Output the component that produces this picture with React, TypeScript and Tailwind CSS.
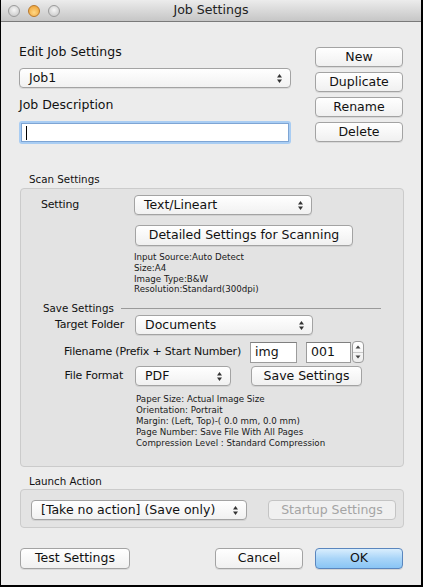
import React from 'react'

function Arrows() {
  return (
    <svg width="7" height="11" viewBox="0 0 7 11" className="shrink-0">
      <path d="M3.5 1 L6 4.5 L1 4.5 Z" fill="#333" />
      <path d="M3.5 10 L6 6.5 L1 6.5 Z" fill="#333" />
    </svg>
  )
}

function PopUp({ label, className = '' }: { label: string; className?: string }) {
  return (
    <div
      className={`flex items-center justify-between h-[20px] pl-[9px] pr-[7px] rounded-[4px] border border-[#a3a3a3] bg-gradient-to-b from-white to-[#f1f1f1] shadow-[0_1px_0_rgba(0,0,0,0.08)] text-[12.5px] leading-none text-[#111] ${className}`}
    >
      <span>{label}</span>
      <Arrows />
    </div>
  )
}

function Btn({
  label,
  className = '',
  disabled = false,
}: {
  label: string
  className?: string
  disabled?: boolean
}) {
  return (
    <div
      className={`flex items-center justify-center h-[20px] rounded-[4px] border text-[12.5px] leading-none ${
        disabled
          ? 'border-[#c4c4c4] bg-[#f0f0f0] text-[#a4a4a4]'
          : 'border-[#a3a3a3] bg-gradient-to-b from-white to-[#f0f0f0] text-[#111] shadow-[0_1px_0_rgba(0,0,0,0.08)]'
      } ${className}`}
    >
      {label}
    </div>
  )
}

function Field({ value, className = '' }: { value: string; className?: string }) {
  return (
    <div
      className={`flex items-center h-[21px] pl-[4px] bg-white border border-[#9c9c9c] border-t-[#7f7f7f] text-[12.5px] leading-none text-[#111] ${className}`}
    >
      {value}
    </div>
  )
}

function Stepper() {
  return (
    <div className="flex flex-col w-[12px] h-[22px] ml-[1px] rounded-[4px] border border-[#9c9c9c] bg-gradient-to-b from-white to-[#ededed] overflow-hidden">
      <div className="flex-1 flex items-center justify-center border-b border-[#c8c8c8]">
        <svg width="6" height="4" viewBox="0 0 6 4">
          <path d="M3 0.5 L5.5 3.5 L0.5 3.5 Z" fill="#444" />
        </svg>
      </div>
      <div className="flex-1 flex items-center justify-center">
        <svg width="6" height="4" viewBox="0 0 6 4">
          <path d="M3 3.5 L5.5 0.5 L0.5 0.5 Z" fill="#444" />
        </svg>
      </div>
    </div>
  )
}

function RowLabel({ text, className = '' }: { text: string; className?: string }) {
  return (
    <div className={`flex justify-end shrink-0 whitespace-nowrap text-[11px] tracking-[-0.2px] ${className}`}>
      {text}
    </div>
  )
}

const scanInfo = [
  'Input Source:Auto Detect',
  'Size:A4',
  'Image Type:B&W',
  'Resolution:Standard(300dpi)',
]

const saveInfo = [
  'Paper Size: Actual Image Size',
  'Orientation: Portrait',
  'Margin: (Left, Top)-( 0.0 mm, 0.0 mm)',
  'Page Number: Save File With All Pages',
  'Compression Level : Standard Compression',
]

export default function App() {
  return (
    <div className="w-[423px] h-[587px] flex flex-col bg-[#ececec] border-l border-r-2 border-b-2 border-black font-['Lucida_Grande','DejaVu_Sans',sans-serif] text-[#111] overflow-hidden">
      {/* title bar */}
      <div className="relative h-[22px] shrink-0 flex items-center pl-[7px] gap-[8px] bg-gradient-to-b from-[#ececec] to-[#c6c6c6] border-b border-[#7a7a7a]">
        <div className="w-[12px] h-[12px] rounded-full border border-[#9a9a9a] bg-[radial-gradient(circle_at_50%_40%,#f6f6f6,#c2c2c2)]" />
        <div className="w-[12px] h-[12px] rounded-full border border-[#b9782a] bg-[radial-gradient(circle_at_50%_65%,#ffd886,#ec9a2a)]" />
        <div className="w-[12px] h-[12px] rounded-full border border-[#9a9a9a] bg-[radial-gradient(circle_at_50%_40%,#f6f6f6,#c2c2c2)]" />
        <div className="absolute inset-0 flex items-center justify-center text-[12.6px] text-[#222]">
          Job Settings
        </div>
      </div>

      <div className="flex flex-col pl-[18px]">
        {/* top section */}
        <div className="flex items-start">
          <div className="flex flex-col w-[272px] mt-[22px]">
            <div className="text-[12.5px] leading-[16px]">Edit Job Settings</div>
            <PopUp label="Job1" className="mt-[8px]" />
            <div className="text-[12.5px] leading-[16px] mt-[9px]">Job Description</div>
            <div className="mt-[8px] h-[23px] rounded-[3px] bg-[#a9cdf3] p-[2px]">
              <div className="h-full bg-white border border-[#7ea5d4] flex items-center pl-[4px]">
                <div className="w-px h-[14px] bg-black" />
              </div>
            </div>
          </div>
          <div className="flex flex-col gap-[5px] w-[88px] ml-[24px] mt-[25px]">
            <Btn label="New" />
            <Btn label="Duplicate" />
            <Btn label="Rename" />
            <Btn label="Delete" />
          </div>
        </div>

        {/* scan settings */}
        <div className="ml-[10px] mt-[29px] text-[10.3px] leading-[13px]">Scan Settings</div>
        <div className="ml-[1px] mt-[2px] w-[384px] h-[279px] rounded-[4px] border border-[#cbcbcb] bg-[#e3e3e3] pl-[20px] pt-[6px] flex flex-col">
          <div className="flex items-center">
            <div className="w-[93px] whitespace-nowrap text-[11px] tracking-[-0.2px]">Setting</div>
            <PopUp label="Text/Lineart" className="w-[178px]" />
          </div>
          <Btn label="Detailed Settings for Scanning" className="ml-[94px] mt-[10px] w-[218px] h-[21px]" />
          <div className="ml-[93px] mt-[6px] text-[8.7px] leading-[10.8px] text-[#1a1a1a]">
            {scanInfo.map((l) => (
              <div key={l}>{l}</div>
            ))}
          </div>

          <div className="flex items-center mt-[7px] ml-[2px]">
            <div className="text-[10.3px] leading-[13px]">Save Settings</div>
            <div className="ml-[7px] w-[260px] h-px bg-[#9a9a9a]" />
          </div>

          <div className="flex items-center">
            <RowLabel text="Target Folder" className="w-[83px]" />
            <PopUp label="Documents" className="ml-[11px] w-[178px]" />
          </div>

          <div className="flex items-center mt-[6px]">
            <RowLabel text="Filename (Prefix + Start Number)" className="w-[200px]" />
            <Field value="img" className="ml-[9px] w-[47px]" />
            <Field value="001" className="ml-[9px] w-[45px]" />
            <Stepper />
          </div>

          <div className="flex items-center mt-[3px]">
            <RowLabel text="File Format" className="w-[82px]" />
            <PopUp label="PDF" className="ml-[12px] w-[96px]" />
            <Btn label="Save Settings" className="ml-[20px] w-[111px]" />
          </div>

          <div className="ml-[95px] mt-[8px] text-[8.7px] leading-[10.9px] text-[#1a1a1a]">
            {saveInfo.map((l) => (
              <div key={l}>{l}</div>
            ))}
          </div>
        </div>

        {/* launch action */}
        <div className="ml-[10px] mt-[8px] text-[10.3px] leading-[13px]">Launch Action</div>
        <div className="ml-[1px] mt-[1px] w-[384px] h-[39px] rounded-[4px] border border-[#cbcbcb] bg-[#e3e3e3] pl-[10px] pt-[10px] flex items-start">
          <PopUp label="[Take no action] (Save only)" className="w-[216px]" />
          <Btn label="Startup Settings" disabled className="ml-[21px] w-[128px]" />
        </div>

        {/* bottom buttons */}
        <div className="flex items-center mt-[20px] ml-[1px]">
          <Btn label="Test Settings" className="w-[110px] h-[21px]" />
          <Btn label="Cancel" className="ml-[85px] w-[88px] h-[21px]" />
          <div className="ml-[12px] w-[88px] h-[21px] flex items-center justify-center rounded-[4px] border border-[#5a86be] bg-gradient-to-b from-[#d9eefd] via-[#a9d5f8] to-[#89c5f5] text-[12.5px] leading-none text-[#111] shadow-[0_1px_0_rgba(0,0,0,0.1)]">
            OK
          </div>
        </div>
      </div>
    </div>
  )
}
